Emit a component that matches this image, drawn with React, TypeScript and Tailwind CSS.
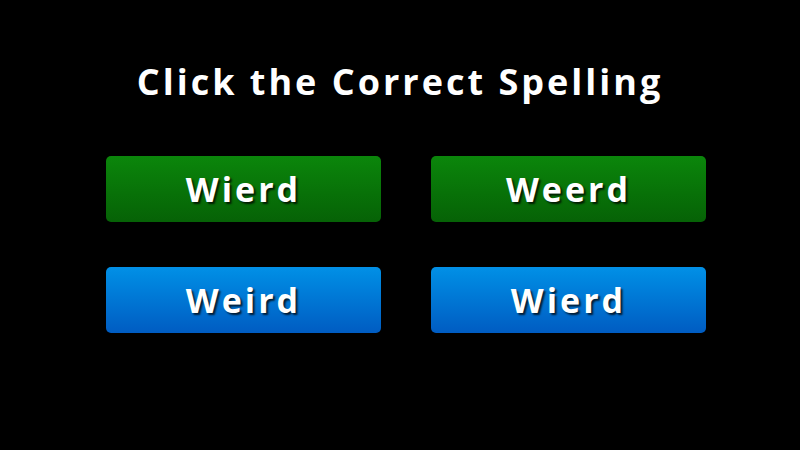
const choices = [
  { label: 'Wierd', color: 'green' },
  { label: 'Weerd', color: 'green' },
  { label: 'Weird', color: 'blue' },
  { label: 'Wierd', color: 'blue' },
];

export default function App() {
  return (
    <div
      className="w-[800px] h-[450px] bg-black flex flex-col items-center"
      style={{ fontFamily: '"Open Sans", "Liberation Sans", sans-serif' }}
    >
      <h1 className="mt-[56px] h-[52px] leading-[52px] text-[36px] font-bold text-white tracking-[3px]">
        Click the Correct Spelling
      </h1>
      <div className="mt-[48px] ml-[12px] grid grid-cols-[275px_275px] gap-x-[50px] gap-y-[45px]">
        {choices.map((c, i) => (
          <button
            key={i}
            className={`h-[66px] rounded-[5px] text-white text-[34px] font-bold tracking-[3px] [text-shadow:2px_2px_2px_rgba(0,0,0,0.75)] ${
              c.color === 'green'
                ? 'bg-gradient-to-b from-[#0b860b] to-[#066206]'
                : 'bg-gradient-to-b from-[#0290e6] to-[#005cc2]'
            }`}
          >
            {c.label}
          </button>
        ))}
      </div>
    </div>
  );
}
